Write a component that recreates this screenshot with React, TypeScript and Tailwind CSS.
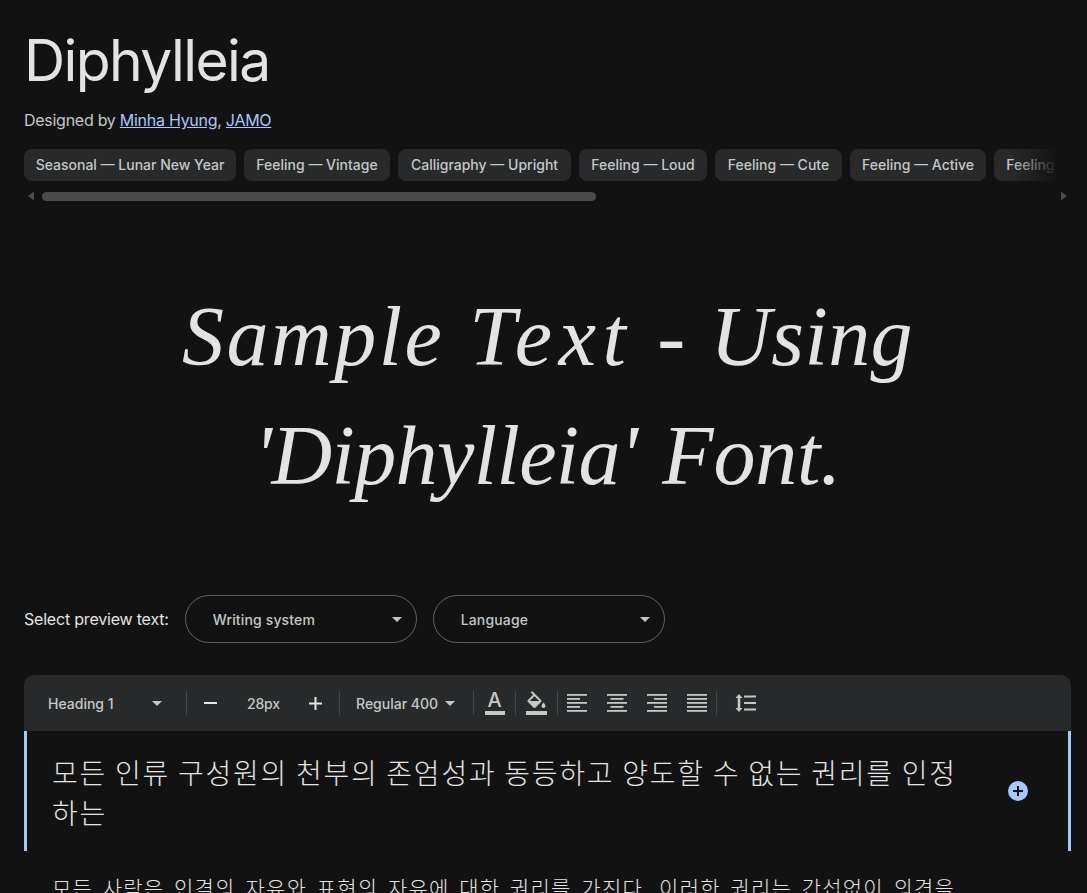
const ui = "font-['Inter','Noto_Sans',sans-serif]";
const tags = [
  { label: "Seasonal — Lunar New Year", width: "w-[212px]" },
  { label: "Feeling — Vintage", width: "w-[146px]" },
  { label: "Calligraphy — Upright", width: "w-[173px]" },
  { label: "Feeling — Loud", width: "w-[128px]" },
  { label: "Feeling — Cute", width: "w-[127px]" },
  { label: "Feeling — Active", width: "w-[136px]" },
  { label: "Feeling — Artistic", width: "w-[142px]" },
];

function Caret({ className = "" }: { className?: string }) {
  return (
    <svg width="10" height="5" viewBox="0 0 10 5" className={className}>
      <path d="M0 0h10L5 5z" fill="#c4c7c5" />
    </svg>
  );
}

function Divider() {
  return <div className="h-[24px] w-px bg-[#444746]" />;
}

function PreviewSelect({ label, width }: { label: string; width: string }) {
  return (
    <div className={`flex h-[48px] items-center justify-between rounded-[24px] border border-[#5f6160] pl-[27px] pr-[14px] ${width}`}>
      <span className="text-[14px] font-medium tracking-[0.15px] text-[#c4c7c5]">{label}</span>
      <Caret />
    </div>
  );
}

function AlignIcon({ kind }: { kind: "left" | "center" | "right" | "justify" }) {
  const lines: Record<string, [number, number][]> = {
    left: [[0, 20], [0, 13], [0, 20], [0, 13], [0, 20]],
    center: [[0, 20], [3.5, 13], [0, 20], [3.5, 13], [0, 20]],
    right: [[0, 20], [7, 13], [0, 20], [7, 13], [0, 20]],
    justify: [[0, 20], [0, 20], [0, 20], [0, 20], [0, 20]],
  };
  return (
    <svg width="20" height="18" viewBox="0 0 20 18" fill="#c4c7c5">
      {lines[kind].map(([x, w], i) => (
        <rect key={i} x={x} y={i * 4} width={w} height="1.8" />
      ))}
    </svg>
  );
}

function Toolbar() {
  return (
    <div className="flex h-[56px] items-center rounded-t-[10px] bg-[#28292a] pl-[24px] text-[14px] font-medium tracking-[0px] text-[#c4c7c5]">
      <div className="flex w-[114px] items-center justify-between">
        <span>Heading 1</span>
        <Caret />
      </div>
      <div className="ml-[24px]"><Divider /></div>
      <div className="flex w-[152px] items-center pl-[17px]">
        <svg width="13" height="2" viewBox="0 0 13 2"><rect width="13" height="2" fill="#e3e3e3" /></svg>
        <span className="ml-[30px] w-[34px] tracking-[-0.2px]">28px</span>
        <svg width="13" height="13" viewBox="0 0 13 13" className="ml-[28px]" fill="#e3e3e3">
          <rect y="5.5" width="13" height="2" />
          <rect x="5.5" width="2" height="13" />
        </svg>
      </div>
      <Divider />
      <div className="flex w-[133px] items-center pl-[16px]">
        <span>Regular 400</span>
        <Caret className="ml-[7px]" />
      </div>
      <Divider />
      <div className="flex w-[41px] justify-center">
        <div className="flex flex-col items-center">
          <span className="text-[20px] leading-[17px] font-medium">A</span>
          <div className="mt-[2px] h-[4px] w-[20px] bg-[#c4c7c5]" />
        </div>
      </div>
      <Divider />
      <div className="flex w-[41px] justify-center">
        <svg width="21" height="24" viewBox="1.5 0 21 24" fill="#c4c7c5">
          <path d="M16.56 8.94L7.62 0 6.21 1.41l2.38 2.38-5.15 5.15c-.59.59-.59 1.54 0 2.12l5.5 5.5c.29.29.68.44 1.06.44s.77-.15 1.06-.44l5.5-5.5c.59-.58.59-1.53 0-2.12zM5.21 10L10 5.21 14.79 10H5.21zM19 11.5s-2 2.17-2 3.5c0 1.1.9 2 2 2s2-.9 2-2c0-1.33-2-3.5-2-3.5z" />
          <rect x="1.5" y="20" width="21" height="4" />
        </svg>
      </div>
      <Divider />
      <div className="flex items-center gap-[20px] pl-[9px] pr-[9px]">
        <AlignIcon kind="left" />
        <AlignIcon kind="center" />
        <AlignIcon kind="right" />
        <AlignIcon kind="justify" />
      </div>
      <Divider />
      <svg width="21" height="18" viewBox="0 0 21 18" fill="#c4c7c5" className="ml-[18px]">
        <path d="M4 0l3.5 4H5.3v10h2.2L4 18l-3.5-4h2.2V4H.5z" />
        <rect x="9" y="1.5" width="12" height="2" />
        <rect x="9" y="8" width="12" height="2" />
        <rect x="9" y="14.5" width="12" height="2" />
      </svg>
    </div>
  );
}

export default function App() {
  return (
    <div className={`h-[893px] w-full overflow-hidden bg-[#121212] pl-[24px] pr-[16px] ${ui}`}>
      <h1 className="pt-[27px] text-[57px] leading-[68px] font-normal tracking-[-1.6px] text-[#e3e3e3]">Diphylleia</h1>
      <p className="mt-[13px] text-[16px] leading-[24px] tracking-[-0.27px] text-[#c4c7c5]">
        Designed by{" "}
        <a className="text-[#a8c7fa] underline">Minha Hyung</a>,{" "}
        <a className="text-[#a8c7fa] underline">JAMO</a>
      </p>

      <div className="relative mt-[17px]">
        <div className="flex gap-[8px] overflow-hidden">
          {tags.map((t) => (
            <span key={t.label} className={`flex h-[32px] shrink-0 items-center justify-center rounded-[8px] bg-[#28292a] pb-[2px] text-[14px] font-medium tracking-[0px] whitespace-nowrap text-[#c4c7c5] ${t.width}`}>
              {t.label}
            </span>
          ))}
        </div>
        <div className="pointer-events-none absolute top-0 right-0 h-[32px] w-[60px] bg-gradient-to-r from-transparent to-[#121212] to-80%" />
        <div className="mt-[10px] flex h-[10px] items-center">
          <svg width="18" height="10" viewBox="0 0 18 10" className="shrink-0"><path d="M4 5l6-4.5v9z" fill="#4a4b4b" /></svg>
          <div className="h-[9px] w-[554px] rounded-full bg-[#4a4b4b]" />
          <div className="flex-1" />
          <svg width="10" height="10" viewBox="0 0 10 10" className="mr-[2px]"><path d="M2 .5L8 5 2 9.5z" fill="#4a4b4b" /></svg>
        </div>
      </div>

      <div className="mt-[76px] text-center font-['Liberation_Serif','Noto_Sans_CJK_KR',serif] text-[84px] leading-[119px] [word-spacing:4px] text-[#e3e3e3] italic">
        <div>
          <span className="tracking-[2.5px]">Sample</span> <span className="tracking-[6.5px]">Text</span> <span>-</span>{" "}
          <span className="tracking-[0.4px]">Using</span>
        </div>
        <div>
          <span className="tracking-[-0.6px]">'Diphylleia'</span> <span className="tracking-[-0.2px]">Font.</span>
        </div>
      </div>

      <div className="mt-[80px] flex items-center">
        <span className="mr-[16px] text-[16px] tracking-[-0.2px] text-[#e3e3e3]">Select preview text:</span>
        <PreviewSelect label="Writing system" width="w-[232px]" />
        <div className="w-[16px]" />
        <PreviewSelect label="Language" width="w-[232px]" />
      </div>

      <div className="mt-[32px]">
        <Toolbar />
        <div className="flex h-[120px] items-center border-x-[3px] border-[#a8c7fa] pr-[40px] pl-[25px]">
          <p className="w-[911px] pt-[2px] font-['Noto_Sans_CJK_KR',sans-serif] text-[28px] leading-[40px] font-light tracking-[1.75px] [word-break:keep-all] text-[#e3e3e3]">
            모든 인류 구성원의 천부의 존엄성과 동등하고 양도할 수 없는 권리를 인정 하는
          </p>
          <div className="ml-auto flex h-[20px] w-[20px] items-center justify-center rounded-full bg-[#a8c7fa]">
            <svg width="10" height="10" viewBox="0 0 10 10" fill="#121212">
              <rect y="4" width="10" height="2" />
              <rect x="4" width="2" height="10" />
            </svg>
          </div>
        </div>
        <p className="mt-[20px] pl-[28px] font-['Noto_Sans_CJK_KR',sans-serif] text-[21px] leading-[32px] font-light tracking-[1.2px] [word-spacing:3.9px] whitespace-nowrap text-[#e3e3e3]">
          모든 사람은 인격의 자유와 표현의 자유에 대한 권리를 가진다. 이러한 권리는 간섭없이 의견을
        </p>
      </div>
    </div>
  );
}
